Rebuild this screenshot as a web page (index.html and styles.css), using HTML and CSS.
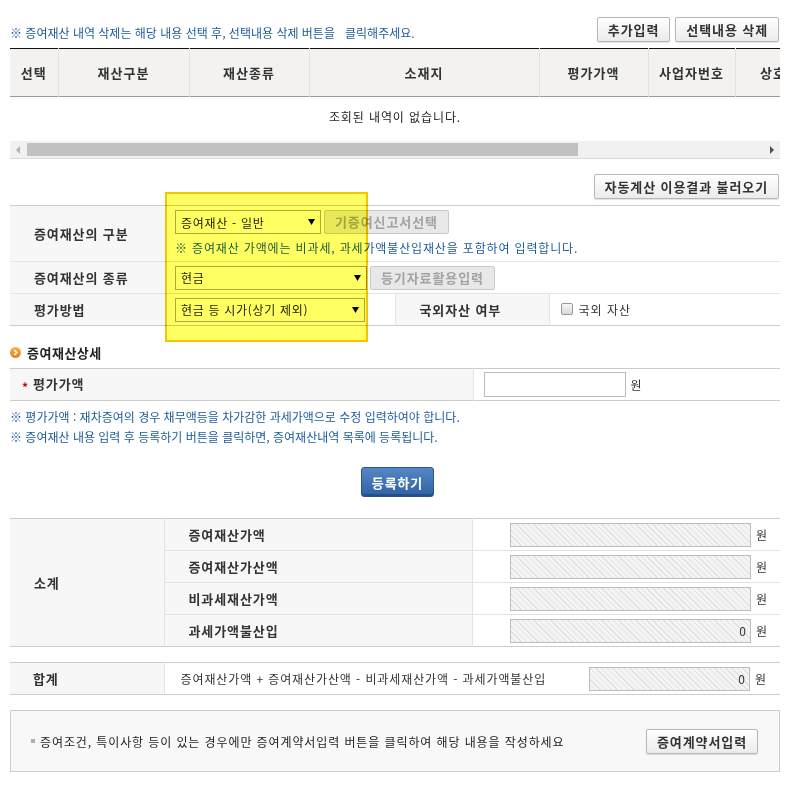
FILE: index.html
```html
<!DOCTYPE html>
<html lang="ko">
<head>
<meta charset="utf-8">
<title>증여재산 입력</title>
<link rel="stylesheet" href="styles.css">
</head>
<body>
<div class="page">
  <div class="topbar">
    <p class="note">※ 증여재산 내역 삭제는 해당 내용 선택 후, 선택내용 삭제 버튼을&nbsp;&nbsp; 클릭해주세요.</p>
    <div class="btns">
      <button class="btn">추가입력</button>
      <button class="btn">선택내용 삭제</button>
    </div>
  </div>

  <div class="grid-wrap">
    <table class="grid">
      <colgroup>
        <col class="c-sel"><col class="c-type"><col class="c-kind"><col class="c-loc"><col class="c-val"><col class="c-biz"><col class="c-name"><col class="c-etc"><col class="c-etc2">
      </colgroup>
      <thead>
        <tr><th>선택</th><th>재산구분</th><th>재산종류</th><th>소재지</th><th>평가가액</th><th>사업자번호</th><th>상호</th><th></th><th></th></tr>
      </thead>
    </table>
    <div class="empty">조회된 내역이 없습니다.</div>
  </div>
  <div class="hscroll">
    <span class="hs-arrow"><svg width="5" height="8" viewBox="0 0 5 8"><polygon points="4,0 4,8 0,4" fill="#b4b4b4"/></svg></span>
    <span class="hs-track"><span class="hs-thumb"></span></span>
    <span class="hs-arrow"><svg width="5" height="8" viewBox="0 0 5 8"><polygon points="1,0 1,8 5,4" fill="#505050"/></svg></span>
  </div>

  <div class="autobar"><button class="btn">자동계산 이용결과 불러오기</button></div>

  <table class="form">
    <colgroup><col class="f-l"><col class="f-v"><col class="f-l2"><col class="f-v2"></colgroup>
    <tr class="r-tall">
      <th>증여재산의 구분</th>
      <td colspan="3" class="cell-top">
        <div class="field">
          <div class="select sel-1"><span>증여재산 - 일반</span><svg class="arr" width="7" height="6" viewBox="0 0 7 6"><polygon points="0,0 7,0 3.5,6" fill="#000"/></svg></div>
          <button class="btn btn-dis">기증여신고서선택</button>
        </div>
        <p class="hint">※ 증여재산 가액에는 비과세, 과세가액불산입재산을 포함하여 입력합니다.</p>
      </td>
    </tr>
    <tr>
      <th>증여재산의 종류</th>
      <td colspan="3" class="cell">
        <div class="field">
          <div class="select sel-2"><span>현금</span><svg class="arr" width="7" height="6" viewBox="0 0 7 6"><polygon points="0,0 7,0 3.5,6" fill="#000"/></svg></div>
          <button class="btn btn-dis">등기자료활용입력</button>
        </div>
      </td>
    </tr>
    <tr>
      <th>평가방법</th>
      <td class="cell">
        <div class="select sel-3"><span>현금 등 시가(상기 제외)</span><svg class="arr" width="7" height="6" viewBox="0 0 7 6"><polygon points="0,0 7,0 3.5,6" fill="#000"/></svg></div>
      </td>
      <th class="th-mid">국외자산 여부</th>
      <td class="cell cell-chk"><label class="chk-label"><span class="chk"></span>국외 자산</label></td>
    </tr>
  </table>

  <h3 class="sec-title"><svg width="11" height="11" viewBox="0 0 11 11"><defs><linearGradient id="og" x1="0" y1="0" x2="0" y2="1"><stop offset="0" stop-color="#f8b04a"/><stop offset="1" stop-color="#e6801a"/></linearGradient></defs><circle cx="5.5" cy="5.5" r="5.5" fill="url(#og)"/><path d="M4.3 3 L6.8 5.5 L4.3 8" fill="none" stroke="#fff" stroke-width="1.6"/></svg>증여재산상세</h3>

  <table class="detail">
    <tr>
      <th><span class="req">*</span>평가가액</th>
      <td><input class="text" type="text"><span class="won">원</span></td>
    </tr>
  </table>

  <div class="notes">
    <p>※ 평가가액 : 재차증여의 경우 채무액등을 차가감한 과세가액으로 수정 입력하여야 합니다.</p>
    <p>※ 증여재산 내용 입력 후 등록하기 버튼을 클릭하면, 증여재산내역 목록에 등록됩니다.</p>
  </div>

  <div class="submit-row"><button class="btn-blue">등록하기</button></div>

  <table class="sum">
    <colgroup><col class="s-1"><col class="s-2"><col class="s-3"></colgroup>
    <tr>
      <th rowspan="4">소계</th>
      <th>증여재산가액</th>
      <td><span class="ro"></span><span class="won">원</span></td>
    </tr>
    <tr>
      <th>증여재산가산액</th>
      <td><span class="ro"></span><span class="won">원</span></td>
    </tr>
    <tr>
      <th>비과세재산가액</th>
      <td><span class="ro"></span><span class="won">원</span></td>
    </tr>
    <tr>
      <th>과세가액불산입</th>
      <td><span class="ro">0</span><span class="won">원</span></td>
    </tr>
  </table>

  <table class="total">
    <colgroup><col class="s-1"><col></colgroup>
    <tr>
      <th>합계</th>
      <td>
        <div class="formula">
          <span class="formula-text">증여재산가액 + 증여재산가산액 - 비과세재산가액 - 과세가액불산입</span>
          <span class="right"><span class="ro ro-sm">0</span><span class="won">원</span></span>
        </div>
      </td>
    </tr>
  </table>

  <div class="guide">
    <p class="guide-text"><span class="bullet"></span>증여조건, 특이사항 등이 있는 경우에만 증여계약서입력 버튼을 클릭하여 해당 내용을 작성하세요</p>
    <button class="btn">증여계약서입력</button>
  </div>

  <div class="highlight"></div>
</div>
</body>
</html>
```

FILE: styles.css
```css
* { box-sizing: border-box; }

body {
  margin: 0;
  background: #fff;
  font-family: "Noto Sans CJK KR", "Noto Sans", sans-serif;
  font-size: 12px;
  color: #333;
}

p, h3 { margin: 0; }

.page {
  position: relative;
  width: 770px;
  margin-left: 10px;
}

/* top bar */
.topbar {
  display: flex;
  justify-content: space-between;
  align-items: flex-end;
  padding-top: 17px;
}

.note {
  color: #1b5b9b;
  line-height: 18px;
}

.btns {
  display: flex;
  gap: 5px;
  margin-right: 1px;
}

.btn {
  height: 25px;
  padding: 0 10px;
  border: 1px solid #b7b7b7;
  border-radius: 2px;
  background: linear-gradient(#ffffff, #ebebeb);
  font-family: "Noto Sans CJK KR", sans-serif;
  font-size: 13px;
  font-weight: bold;
  line-height: 23px;
  letter-spacing: 0.9px;
  color: #333;
  box-shadow: 0 1px 1px rgba(0, 0, 0, 0.12);
  white-space: nowrap;
}

/* list grid */
.grid-wrap {
  margin-top: 6px;
  overflow: hidden;
}

.grid {
  width: 1051px;
  table-layout: fixed;
  border-collapse: collapse;
  border-top: 1px solid #111;
  border-bottom: 1px solid #9a9a9a;
}

.c-sel { width: 48px; }
.c-type { width: 131px; }
.c-kind { width: 120px; }
.c-loc { width: 230px; }
.c-val { width: 109px; }
.c-biz { width: 87px; }
.c-name { width: 76px; }
.c-etc { width: 120px; }
.c-etc2 { width: 130px; }

.grid th {
  height: 48px;
  padding: 0;
  background: #f3f2f1;
  border-right: 1px solid #e2e2e2;
  font-size: 13px;
  font-weight: bold;
  letter-spacing: 1px;
  color: #333;
  white-space: nowrap;
}

.empty {
  width: 770px;
  height: 38px;
  padding-top: 1px;
  line-height: 38px;
  text-align: center;
  letter-spacing: 0.9px;
  color: #222;
}

.hscroll {
  margin-top: 6px;
  height: 18px;
  display: flex;
  background: #f1f1f1;
  border-bottom: 1px solid #dcdcdc;
}

.hs-arrow {
  width: 17px;
  display: flex;
  align-items: center;
  justify-content: center;
}

.hs-track {
  flex: 1;
  padding-top: 2px;
}

.hs-thumb {
  display: block;
  width: 551px;
  height: 13px;
  background: #c1c1c1;
}

.autobar {
  display: flex;
  justify-content: flex-end;
  margin-top: 15px;
  padding-right: 1px;
}

/* form table */
.form, .detail, .sum, .total {
  width: 100%;
  border-collapse: collapse;
  table-layout: fixed;
  border-top: 1px solid #cccccc;
  border-bottom: 1px solid #cccccc;
}

.form { margin-top: 6px; }

.f-l { width: 155px; }
.f-v { width: 230px; }
.f-l2 { width: 154px; }
.f-v2 { width: 231px; }

.form th, .detail th, .sum th, .total th {
  background: #f7f7f7;
  text-align: left;
  padding: 0 0 0 24px;
  font-size: 13px;
  font-weight: bold;
  letter-spacing: 0.9px;
  color: #333;
  white-space: nowrap;
}

.form tr + tr th, .form tr + tr td {
  border-top: 1px solid #e3e3e3;
}

.form tr { height: 32px; }
.form tr.r-tall { height: 56px; }

.cell-top {
  vertical-align: top;
  padding: 4px 0 0 10px;
}

.cell {
  padding: 0 0 0 10px;
  vertical-align: middle;
}

.th-mid, .cell-chk {
  border-left: 1px solid #e3e3e3;
}

.cell-chk { padding-left: 11px; }

.field {
  display: flex;
  align-items: center;
  gap: 3px;
}

.select {
  display: flex;
  align-items: center;
  justify-content: space-between;
  height: 24px;
  padding: 0 5px 0 5px;
  border: 1px solid #a9a9a9;
  background: #fff;
  color: #222;
  letter-spacing: 0.7px;
  white-space: nowrap;
}

.sel-1 { width: 146px; }
.sel-2 { width: 192px; }
.sel-3 { width: 190px; }

.btn-dis {
  height: 24px;
  line-height: 22px;
  background: #e8e8e8;
  border-color: #c9c9c9;
  color: #a3a3a3;
  box-shadow: none;
}

.hint {
  margin-top: 5px;
  line-height: 18px;
  letter-spacing: 0.85px;
  color: #1b5b9b;
}

.chk-label {
  display: inline-flex;
  align-items: center;
  letter-spacing: 1px;
  color: #333;
}

.chk {
  display: inline-block;
  width: 12px;
  height: 12px;
  margin-right: 6px;
  border: 1px solid #9a9a9a;
  border-radius: 2px;
  background: linear-gradient(#f6f6f6, #dadada);
}

/* detail */
.sec-title {
  display: flex;
  align-items: center;
  gap: 6px;
  height: 20px;
  margin-top: 16px;
  font-size: 13px;
  font-weight: bold;
  letter-spacing: 0.5px;
  color: #222;
}

.detail { margin-top: 6px; }

.detail tr { height: 32px; }

.detail th {
  width: 463px;
  padding-left: 12px;
  border-right: 1px solid #e3e3e3;
}

.req {
  color: #cc0000;
  font-size: 12px;
  margin-right: 4px;
  vertical-align: -3px;
}

.detail td {
  padding-left: 10px;
}

.text {
  width: 142px;
  height: 25px;
  border: 1px solid #bbbbbb;
  vertical-align: middle;
}

.won {
  margin-left: 5px;
  color: #333;
  vertical-align: middle;
}

.notes { margin-top: 6px; }

.notes p {
  line-height: 20px;
  color: #1b5b9b;
}

.submit-row {
  display: flex;
  justify-content: center;
  margin-top: 20px;
}

.btn-blue {
  width: 73px;
  height: 30px;
  margin-left: 5px;
  border: 1px solid #2a5590;
  border-radius: 3px;
  background: linear-gradient(#5587c6, #2f62a4);
  box-shadow: inset 0 -2px 0 #244e88;
  font-family: "Noto Sans CJK KR", sans-serif;
  font-size: 13px;
  font-weight: bold;
  letter-spacing: 0.9px;
  color: #fff;
}

/* subtotal */
.sum { margin-top: 21px; }

.s-1 { width: 154px; }
.s-2 { width: 308px; }
.s-3 { width: 308px; }

.sum tr { height: 32px; }

.sum th {
  border-right: 1px solid #e3e3e3;
}

.sum tr + tr th, .sum tr + tr td {
  border-top: 1px solid #e3e3e3;
}

.sum td {
  text-align: right;
  padding-right: 13px;
}

.ro {
  display: inline-block;
  width: 241px;
  height: 24px;
  padding-right: 4px;
  border: 1px solid #bdbdbd;
  background: repeating-linear-gradient(45deg, #f4f4f4 0 3px, #e1e1e1 3px 4px);
  line-height: 22px;
  text-align: right;
  color: #333;
  vertical-align: middle;
}

.ro-sm { width: 161px; }

/* total */
.total { margin-top: 15px; }
.total tr { height: 32px; }

.total th {
  padding-left: 23px;
  border-right: 1px solid #e3e3e3;
}

.formula {
  display: flex;
  justify-content: space-between;
  align-items: center;
  padding: 0 13px 0 15px;
  color: #333;
}

.formula-text { letter-spacing: 0.9px; }

.right {
  display: flex;
  align-items: center;
}

/* guide box */
.guide {
  display: flex;
  align-items: center;
  justify-content: space-between;
  height: 62px;
  margin-top: 15px;
  padding: 0 21px 0 20px;
  border: 1px solid #cccccc;
  background: #f8f8f8;
}

.guide-text {
  display: flex;
  align-items: center;
  letter-spacing: 0.9px;
  color: #222;
}

.bullet {
  display: inline-block;
  width: 4px;
  height: 4px;
  margin-right: 5px;
  background: #b0b0b0;
}

/* highlight overlay */
.highlight {
  position: absolute;
  left: 155px;
  top: 192px;
  width: 203px;
  height: 150px;
  border: 2px solid #f4c500;
  background: #ffff62;
  mix-blend-mode: multiply;
  pointer-events: none;
}
```
